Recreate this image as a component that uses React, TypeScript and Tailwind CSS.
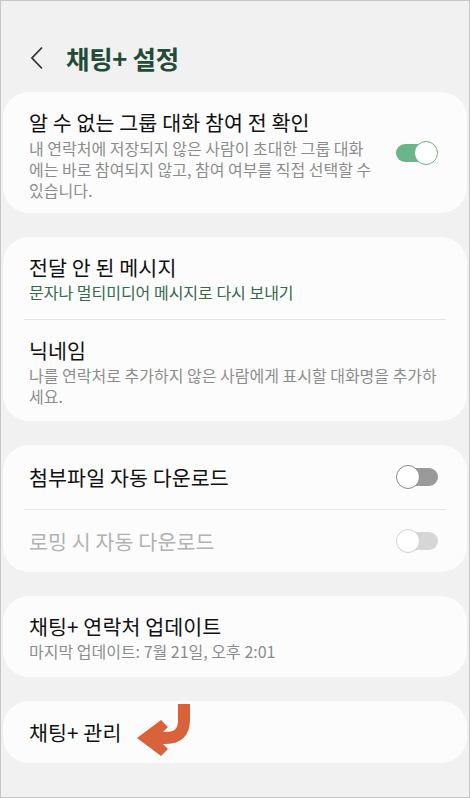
const FONT = { fontFamily: '"Noto Sans CJK KR", "Noto Sans", sans-serif' };

function Toggle({ on, disabled }: { on: boolean; disabled?: boolean }) {
  if (on) {
    return (
      <div className="relative h-[24px] w-[42px] shrink-0">
        <div className="absolute left-0 top-[3px] h-[18px] w-[40px] rounded-full bg-[#6bb588]" />
        <div className="absolute right-0 top-0 h-[24px] w-[24px] rounded-full border-[1.5px] border-[#6bb588] bg-white" />
      </div>
    );
  }
  return (
    <div className="relative h-[24px] w-[42px] shrink-0">
      <div
        className={`absolute right-0 top-[3px] h-[18px] w-[40px] rounded-full ${
          disabled ? 'bg-[#d6d6d6]' : 'bg-[#9a9a9a]'
        }`}
      />
      <div
        className={`absolute left-0 top-0 h-[24px] w-[24px] rounded-full border-[1.5px] bg-white ${
          disabled ? 'border-[#d0d0d0]' : 'border-[#8a8a8a]'
        }`}
      />
    </div>
  );
}

function Card({ children, className = '' }: { children: React.ReactNode; className?: string }) {
  return <div className={`rounded-[26px] bg-[#fcfcfc] ${className}`}>{children}</div>;
}

function Divider() {
  return <div className="mx-[21px] h-px bg-[#e6e6e6]" />;
}

function CurvedArrow() {
  return (
    <svg width="58" height="56" viewBox="0 0 58 56" className="ml-[14px] -mt-[2px]">
      <path d="M49 1 V17 Q49 35 31 35 H18" fill="none" stroke="#d9623a" strokeWidth="12" />
      <polygon points="2,35 26,17 33,24 22,35 33,46 26,53" fill="#d9623a" />
    </svg>
  );
}

const TITLE = 'text-[20.6px] leading-[26px] tracking-[0.1px]';
const SUB = 'text-[16px] leading-[21px]';

export default function App() {
  return (
    <div
      className="h-[798px] w-[470px] overflow-hidden border border-[#c6c6c6] bg-[#f1f1f1] px-[2px] text-[#111]"
      style={FONT}
    >
      {/* header */}
      <div className="flex h-[91px] items-center pl-[27px] pt-[22px]">
        <svg width="14" height="24" viewBox="0 0 14 24" className="mr-[22px]">
          <polyline points="12,1.5 2,12 12,22.5" fill="none" stroke="#333" strokeWidth="1.8" />
        </svg>
        <h1 className="text-[25.5px] font-bold leading-none tracking-[-0.3px] text-[#244b35]">채팅+ 설정</h1>
      </div>

      <div className="flex flex-col gap-[24px]">
        {/* unknown group chat */}
        <Card className="flex items-center pb-[12px] pl-[26px] pr-[29px] pt-[17px]">
          <div className="w-[345px] shrink-0">
            <div className={TITLE}>알 수 없는 그룹 대화 참여 전 확인</div>
            <div className={`mt-[3px] ${SUB} text-[#8c8c8c]`}>
              내 연락처에 저장되지 않은 사람이 초대한 그룹 대화에는 바로 참여되지 않고, 참여 여부를 직접 선택할 수 있습니다.
            </div>
          </div>
          <div className="ml-auto -mt-[4px]">
            <Toggle on />
          </div>
        </Card>

        {/* messages / nickname */}
        <Card>
          <div className="pb-[16px] pl-[26px] pr-[21px] pt-[17px]">
            <div className={TITLE}>전달 안 된 메시지</div>
            <div className={`mt-[2px] ${SUB} text-[#35694b]`}>문자나 멀티미디어 메시지로 다시 보내기</div>
          </div>
          <Divider />
          <div className="pb-[14px] pl-[26px] pr-[21px] pt-[17px]">
            <div className={TITLE}>닉네임</div>
            <div className={`mt-[2px] ${SUB} text-[#8c8c8c]`}>
              나를 연락처로 추가하지 않은 사람에게 표시할 대화명을 추가하세요.
            </div>
          </div>
        </Card>

        {/* downloads */}
        <Card>
          <div className="flex h-[64px] items-center pl-[26px] pr-[29px]">
            <div className={TITLE}>첨부파일 자동 다운로드</div>
            <div className="ml-auto">
              <Toggle on={false} />
            </div>
          </div>
          <Divider />
          <div className="flex h-[62px] items-center pl-[26px] pr-[29px]">
            <div className={`${TITLE} text-[#b2b2b2]`}>로밍 시 자동 다운로드</div>
            <div className="ml-auto">
              <Toggle on={false} disabled />
            </div>
          </div>
        </Card>

        {/* contacts update */}
        <Card className="pb-[15px] pl-[26px] pr-[21px] pt-[17px]">
          <div className={TITLE}>채팅+ 연락처 업데이트</div>
          <div className={`mt-[2px] ${SUB} text-[#8c8c8c]`}>마지막 업데이트: 7월 21일, 오후 2:01</div>
        </Card>

        {/* manage */}
        <Card className="flex h-[62px] items-center pl-[26px] pr-[21px]">
          <div className={TITLE}>채팅+ 관리</div>
          <CurvedArrow />
        </Card>
      </div>
    </div>
  );
}
